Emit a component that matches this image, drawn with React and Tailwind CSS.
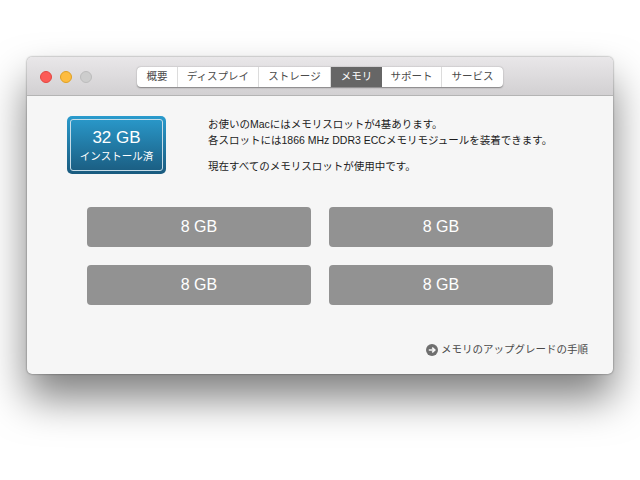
import React from 'react';

const tabs = [
    { label: '概要', width: 'w-[41px]' },
    { label: 'ディスプレイ', width: 'w-[81px]' },
    { label: 'ストレージ', width: 'w-[72px]' },
    { label: 'メモリ', width: 'w-[51px]', active: true },
    { label: 'サポート', width: 'w-[60px]' },
    { label: 'サービス', width: 'w-[61px]' }
];

const slots = ['8 GB', '8 GB', '8 GB', '8 GB'];

const App = () => {
    return (
        <div className="w-[640px] h-[480px] bg-white overflow-hidden pt-[57px] pl-[27px] font-['Liberation_Sans','Noto_Sans_CJK_JP',sans-serif]">
            <div className="w-[586px] h-[317px] rounded-[5px] overflow-hidden bg-[#f6f6f6] shadow-[0_0_2px_rgba(0,0,0,0.55),0_24px_42px_rgba(0,0,0,0.5)] flex flex-col">
                <div className="h-[39px] shrink-0 bg-gradient-to-b from-[#e9e7e9] to-[#d2d0d2] border-b border-[#b4b4b4] flex items-start">
                    <div className="flex gap-2 pl-[13px] pt-[14px] w-[110px]">
                        <div className="w-3 h-3 rounded-full bg-[#fc5b57] border border-[#e3463f]" />
                        <div className="w-3 h-3 rounded-full bg-[#fdbc40] border border-[#dfa023]" />
                        <div className="w-3 h-3 rounded-full bg-[#cdcdcd] border border-[#bcbcbc]" />
                    </div>
                    <div className="flex mt-[10px] h-5 rounded-[4px] bg-white shadow-[0_0.5px_1.5px_rgba(0,0,0,0.4)] overflow-hidden">
                        {tabs.map((t, i) => (
                            <div
                                key={i}
                                className={`${t.width} flex items-center justify-center text-[10.5px] ${t.active ? 'bg-[#666666] text-white' : 'text-[#4a4a4a] border-r border-[#dcdcdc] last:border-r-0'}`}
                            >
                                {t.label}
                            </div>
                        ))}
                    </div>
                </div>
                <div className="flex-1 flex flex-col">
                    <div className="flex pt-5 pl-10">
                        <div className="w-[99px] h-[58px] p-[3px] rounded-[5px] bg-gradient-to-b from-[#2a9bcd] to-[#1a5b7f] shrink-0">
                            <div className="h-full rounded-[3px] border border-[#c6dce8] flex flex-col items-center justify-center text-white">
                                <div className="text-[17px] leading-[20px]">32 GB</div>
                                <div className="text-[10.5px] leading-[14px] mt-[1px]">インストール済</div>
                            </div>
                        </div>
                        <div className="ml-[42px] text-[10.5px] leading-[16px] text-[#1c1c1c] pt-[-1px]">
                            <p>お使いのMacにはメモリスロットが4基あります。</p>
                            <p>各スロットには1866 MHz DDR3 ECCメモリモジュールを装着できます。</p>
                            <p className="mt-[10px]">現在すべてのメモリスロットが使用中です。</p>
                        </div>
                    </div>
                    <div className="grid grid-cols-2 gap-x-[18px] gap-y-[18px] w-[466px] ml-[60px] mt-[33px]">
                        {slots.map((s, i) => (
                            <div key={i} className="h-10 rounded-[4px] bg-[#929292] flex items-center justify-center text-white text-[16px]">
                                {s}
                            </div>
                        ))}
                    </div>
                    <div className="flex items-center justify-end gap-[3px] pr-[25px] mt-[37px] text-[10.5px] text-[#4a4a4a]">
                        <svg width="12" height="12" viewBox="0 0 12 12">
                            <circle cx="6" cy="6" r="6" fill="#6f6f6f" />
                            <path d="M2.8 6H8.4M6.2 3.6L8.8 6L6.2 8.4" fill="none" stroke="#f6f6f6" strokeWidth="1.6" />
                        </svg>
                        <span>メモリのアップグレードの手順</span>
                    </div>
                </div>
            </div>
        </div>
    );
};

export default App;
